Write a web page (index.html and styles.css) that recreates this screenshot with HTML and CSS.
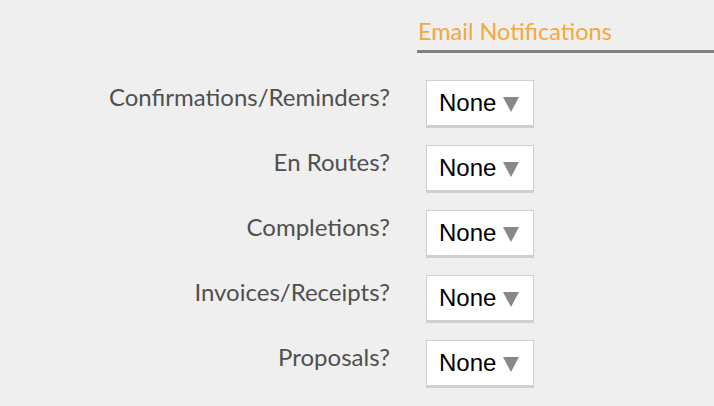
FILE: index.html
```html
<!DOCTYPE html>
<html>
<head>
<meta charset="utf-8">
<link rel="stylesheet" href="styles.css">
</head>
<body>
<div class="page">
  <div class="form">
    <div class="spacer"></div>
    <div class="header">Email Notifications</div>

    <div class="label">Confirmations/Reminders?</div>
    <div class="field"><div class="select"><span>None</span><svg class="arrow" width="16" height="16" viewBox="0 0 16 16"><polygon points="0,1 16,1 8,16" fill="#888"/></svg></div></div>

    <div class="label">En Routes?</div>
    <div class="field"><div class="select"><span>None</span><svg class="arrow" width="16" height="16" viewBox="0 0 16 16"><polygon points="0,1 16,1 8,16" fill="#888"/></svg></div></div>

    <div class="label">Completions?</div>
    <div class="field"><div class="select"><span>None</span><svg class="arrow" width="16" height="16" viewBox="0 0 16 16"><polygon points="0,1 16,1 8,16" fill="#888"/></svg></div></div>

    <div class="label">Invoices/Receipts?</div>
    <div class="field"><div class="select"><span>None</span><svg class="arrow" width="16" height="16" viewBox="0 0 16 16"><polygon points="0,1 16,1 8,16" fill="#888"/></svg></div></div>

    <div class="label">Proposals?</div>
    <div class="field"><div class="select"><span>None</span><svg class="arrow" width="16" height="16" viewBox="0 0 16 16"><polygon points="0,1 16,1 8,16" fill="#888"/></svg></div></div>
  </div>
</div>
</body>
</html>
```
FILE: styles.css
```css
html, body {
  margin: 0;
  padding: 0;
  background: #efefef;
}
.page {
  width: 714px;
  height: 406px;
  overflow: hidden;
  padding-top: 17px;
  box-sizing: border-box;
}
.form {
  display: grid;
  grid-template-columns: 390px 297px;
  column-gap: 27px;
  row-gap: 17px;
}
.header {
  font-family: "Lato", "Noto Sans", sans-serif;
  font-size: 23.5px;
  line-height: 28px;
  color: #f5a83b;
  padding-left: 1px;
  padding-bottom: 5px;
  border-bottom: 3px solid #808080;
  margin-bottom: 10px;
}
.label {
  font-family: "Lato", "Noto Sans", sans-serif;
  font-size: 24px;
  line-height: 28px;
  color: #505050;
  text-align: right;
  padding-top: 3px;
}
.field {
  padding-left: 9px;
}
.select {
  width: 94px;
  height: 44px;
  background: #fff;
  border: 1px solid #d0d0d0;
  border-bottom: 3px solid #cfcfcf;
  display: flex;
  align-items: center;
  padding-left: 12px;
  font-family: "Liberation Sans", Arial, sans-serif;
  font-size: 24px;
  color: #000;
}
.arrow {
  margin-left: 7px;
  margin-top: 1px;
}
```
